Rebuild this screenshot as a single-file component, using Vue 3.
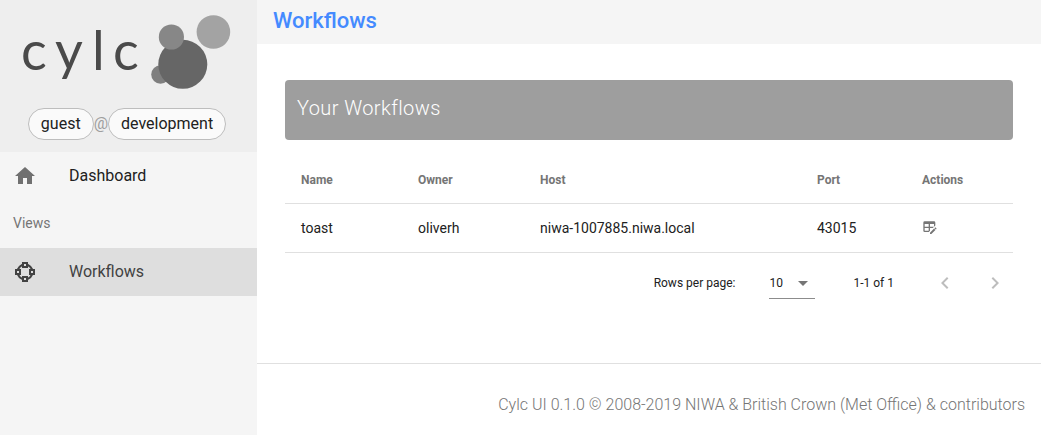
<script setup>
import { ref } from 'vue'

const user = 'guest'
const host = 'development'
const rowsPerPage = ref('10')
const headers = ['Name', 'Owner', 'Host', 'Port', 'Actions']
const workflows = [
  { name: 'toast', owner: 'oliverh', host: 'niwa-1007885.niwa.local', port: 43015 }
]
</script>

<template>
  <div class="app">
    <aside class="drawer">
      <header class="brand">
        <a class="logo" href="#" aria-label="cylc home">
          <svg viewBox="0 0 257 96" width="257" height="96">
            <text class="wordmark" x="21 55 92 113" y="70">cylc</text>
            <circle cx="160.500" cy="74.500" r="9.300" fill="#7f7f7f" />
            <circle cx="182.800" cy="64.300" r="24.500" fill="#666" />
            <circle cx="171.400" cy="37" r="12.600" fill="#878787" />
            <circle cx="213.400" cy="32" r="16.800" fill="#a3a3a3" />
          </svg>
        </a>
        <div class="identity">
          <span class="chip">{{ user }}</span>
          <span class="at">@</span>
          <span class="chip">{{ host }}</span>
        </div>
      </header>
      <nav class="menu">
        <a class="item" href="#dashboard">
          <svg class="icon home" viewBox="0 0 24 24"><path d="M10 20v-6h4v6h5v-8h3L12 3 2 12h3v8z" /></svg>
          <span>Dashboard</span>
        </a>
        <div class="subheader">Views</div>
        <a class="item active" href="#workflows" aria-current="page">
          <svg class="icon" viewBox="0 0 24 24">
            <g fill="none" stroke="currentColor" stroke-width="2">
              <circle cx="12" cy="12" r="7.500" />
              <g fill="#dedede">
                <rect x="10" y="3" width="4" height="4" />
                <rect x="10" y="17" width="4" height="4" />
                <rect x="3" y="10" width="4" height="4" />
                <rect x="17" y="10" width="4" height="4" />
              </g>
            </g>
          </svg>
          <span>Workflows</span>
        </a>
      </nav>
    </aside>

    <div class="page">
      <header class="toolbar"><h1>Workflows</h1></header>
      <main class="content">
        <section class="card">
          <div class="banner"><h2>Your Workflows</h2></div>
          <table>
            <colgroup>
              <col class="c-name"><col class="c-owner"><col><col class="c-port"><col class="c-actions">
            </colgroup>
            <thead>
              <tr><th v-for="h in headers" :key="h" scope="col">{{ h }}</th></tr>
            </thead>
            <tbody>
              <tr v-for="w in workflows" :key="w.name">
                <td>{{ w.name }}</td>
                <td>{{ w.owner }}</td>
                <td>{{ w.host }}</td>
                <td>{{ w.port }}</td>
                <td>
                  <button class="edit" type="button" aria-label="Edit workflow">
                    <svg viewBox="0 0 24 24" width="16" height="16">
                      <path d="M21.700 13.350l-1 1-2.050-2.050 1-1a.55.55 0 0 1 .77 0l1.280 1.280c.21.210.21.560 0 .77M12 18.940l6.070-6.060 2.050 2.050L14.060 21H12v-2.060M4 2h14a2 2 0 0 1 2 2v4.170L16.170 12H12v4.170L10.170 18H4a2 2 0 0 1-2-2V4a2 2 0 0 1 2-2m0 4v4h6V6H4m8 0v4h6V6h-6m-8 6v4h6v-4H4z" />
                    </svg>
                  </button>
                </td>
              </tr>
            </tbody>
          </table>
          <div class="pager">
            <label for="rows">Rows per page:</label>
            <div class="select">
              <select id="rows" v-model="rowsPerPage">
                <option>10</option>
                <option>25</option>
              </select>
              <svg viewBox="0 0 24 24" width="24" height="24"><path d="M7 10l5 5 5-5z" /></svg>
            </div>
            <span class="range">1-1 of 1</span>
            <button class="step" type="button" disabled aria-label="Previous page">
              <svg viewBox="0 0 24 24" width="24" height="24"><path d="M15.410 7.410L14 6l-6 6 6 6 1.410-1.410L10.830 12z" /></svg>
            </button>
            <button class="step" type="button" disabled aria-label="Next page">
              <svg viewBox="0 0 24 24" width="24" height="24"><path d="M8.590 16.590L10 18l6-6-6-6-1.410 1.410L13.170 12z" /></svg>
            </button>
          </div>
        </section>
      </main>
      <footer class="footer">Cylc UI 0.1.0 © 2008-2019 NIWA &amp; British Crown (Met Office) &amp; contributors</footer>
    </div>
  </div>
</template>

<style>
body {
  background: #fff;
}
</style>

<style scoped>
.app {
  display: flex;
  min-height: 100vh;
  font-family: Roboto, sans-serif;
  font-size: 16px;
  line-height: 24px;
  color: #212121;
}
svg {
  display: block;
  fill: currentColor;
}
.drawer {
  flex: 0 0 257px;
  background: #f5f5f5;
}
.brand {
  background: #eee;
  padding-bottom: 12px;
}
.logo {
  display: block;
  color: #4a4a4a;
}
.wordmark {
  font-family: Lato, sans-serif;
  font-size: 54px;
  font-weight: 400;
}
.identity {
  display: flex;
  justify-content: center;
  align-items: center;
  margin-top: 12px;
  padding-right: 3px;
}
.chip {
  box-sizing: border-box;
  height: 32px;
  padding: 3px 12px;
  border: 1px solid #bdbdbd;
  border-radius: 16px;
  background: #fafafa;
}
.at {
  color: #9e9e9e;
  font-weight: 400;
}
.item {
  display: flex;
  align-items: center;
  height: 48px;
  padding-left: 13px;
  gap: 32px;
  color: #212121;
  text-decoration: none;
}
.item.active {
  background: #dedede;
  color: #424242;
}
.icon {
  width: 24px;
  height: 24px;
}
.home {
  color: #707070;
}
.subheader {
  height: 48px;
  line-height: 46px;
  padding-left: 13px;
  font-size: 14px;
  color: #757575;
}
.page {
  flex: 1;
  min-width: 0;
  display: flex;
  flex-direction: column;
}
.toolbar {
  height: 44px;
  box-sizing: border-box;
  padding: 5px 16px;
  background: #f5f5f5;
}
h1 {
  margin: 0;
  font-size: 22px;
  line-height: 32px;
  font-weight: 500;
  color: #448aff;
}
.content {
  flex: 1;
  padding: 36px 28px;
}
.banner {
  height: 60px;
  box-sizing: border-box;
  padding: 12px;
  border-radius: 4px;
  background: #9e9e9e;
  color: #fff;
}
h2 {
  margin: 0;
  font-size: 20px;
  line-height: 32px;
  font-weight: 300;
  letter-spacing: 0.02em;
}
table {
  width: 100%;
  margin-top: 16px;
  table-layout: fixed;
  border-collapse: separate;
  border-spacing: 0;
}
.c-name {
  width: 117px;
}
.c-owner {
  width: 122px;
}
.c-port {
  width: 105px;
}
.c-actions {
  width: 107px;
}
th,
td {
  height: 48px;
  padding: 0 16px;
  text-align: left;
  border-bottom: 1px solid #e0e0e0;
}
th {
  height: 47px;
  font-size: 12px;
  font-weight: 700;
  color: #757575;
}
td {
  font-size: 14px;
}
button {
  display: block;
  padding: 0;
  border: 0;
  background: none;
  color: #757575;
}
.pager {
  display: flex;
  justify-content: flex-end;
  align-items: center;
  height: 60px;
  padding-right: 6px;
  font-size: 12px;
}
.select {
  display: grid;
  width: 46px;
  height: 31px;
  align-items: center;
  margin: 0 38px 0 34px;
  border-bottom: 1px solid #8c8c8c;
}
select {
  grid-area: 1 / 1;
  width: 46px;
  padding: 0;
  border: 0;
  appearance: none;
  background: none;
  font: inherit;
  color: inherit;
}
.select svg {
  grid-area: 1 / 1;
  justify-self: end;
  color: #757575;
  pointer-events: none;
}
.range {
  margin-right: 39px;
}
.step {
  color: #bdbdbd;
}
.step + .step {
  margin-left: 26px;
}
.footer {
  box-sizing: border-box;
  min-height: 72px;
  padding: 29px 16px 0;
  border-top: 1px solid #e0e0e0;
  text-align: right;
  font-weight: 300;
  color: #757575;
}
</style>
